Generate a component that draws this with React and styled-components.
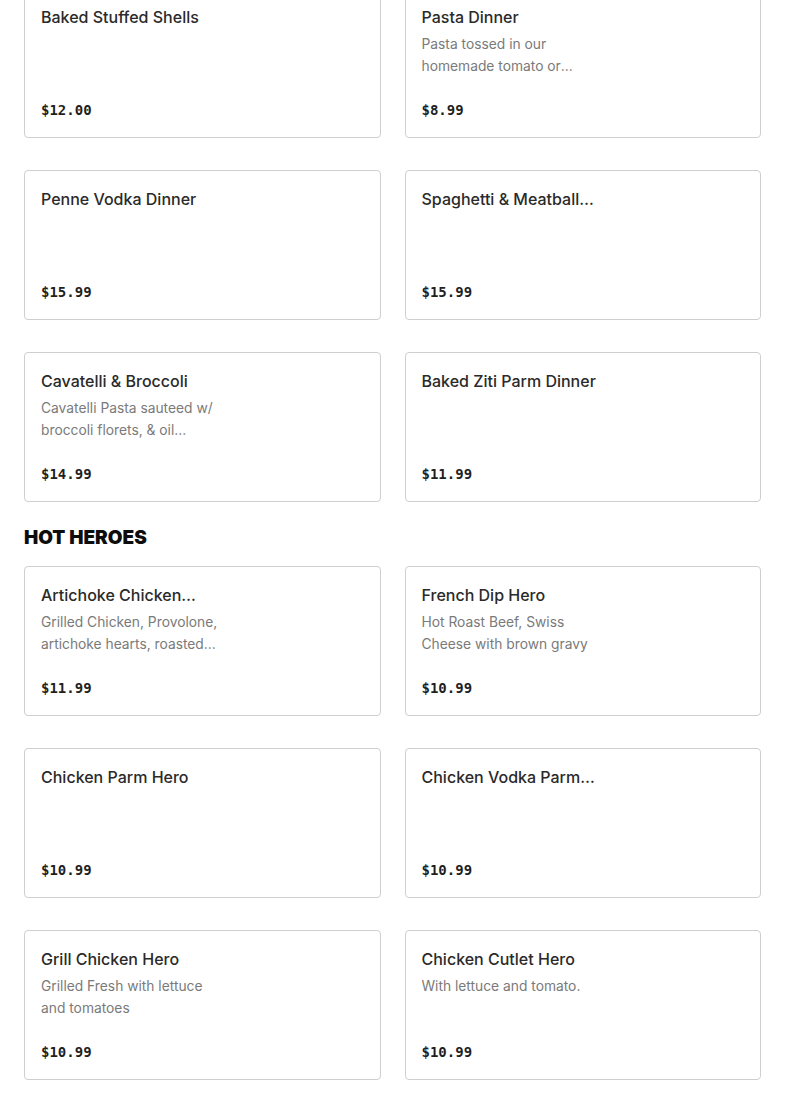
import React from 'react';
import styled, { createGlobalStyle } from 'styled-components';

const GlobalStyle = createGlobalStyle`
  html, body {
    margin: 0;
    padding: 0;
    background: #ffffff;
  }
  body {
    font-family: Inter, "Noto Sans", sans-serif;
    color: #2d2d2d;
  }
`;

const Page = styled.div`
  padding: 0 24px 24px;
  margin-top: -12px;
`;

const Section = styled.section`
  display: flex;
  flex-direction: column;
`;

const SectionTitle = styled.h2`
  margin: 25px 0 17px;
  font-family: Inter, sans-serif;
  font-weight: 900;
  font-size: 19px;
  line-height: 22px;
  color: #0d0d0d;
`;

const Grid = styled.div`
  display: grid;
  grid-template-columns: 1fr 1fr;
  column-gap: 24px;
  row-gap: 32px;
`;

const Card = styled.div`
  box-sizing: border-box;
  height: 150px;
  display: flex;
  flex-direction: column;
  padding: 15px 16px 17px;
  border: 1px solid #cfcfcf;
  border-radius: 4px;
  background: #fff;
`;

const TextColumn = styled.div`
  width: 180px;
  display: flex;
  flex-direction: column;
`;

const ItemName = styled.div`
  font-size: 16px;
  font-weight: 500;
  line-height: 26px;
  color: #2a2a2a;
  display: -webkit-box;
  -webkit-line-clamp: 1;
  -webkit-box-orient: vertical;
  overflow: hidden;
`;

const ItemDesc = styled.div`
  margin-top: 3px;
  font-size: 13.8px;
  line-height: 22px;
  color: #7a7a7a;
  display: -webkit-box;
  -webkit-line-clamp: 2;
  -webkit-box-orient: vertical;
  overflow: hidden;
`;

const Price = styled.div`
  margin-top: auto;
  font-family: "DejaVu Sans Mono", "Liberation Mono", monospace;
  font-weight: 700;
  font-size: 14px;
  line-height: 20px;
  color: #1f1f1f;
`;

const pasta = [
  { name: 'Baked Stuffed Shells', price: '$12.00' },
  { name: 'Pasta Dinner', desc: 'Pasta tossed in our homemade tomato or vodka sauce', price: '$8.99' },
  { name: 'Penne Vodka Dinner', price: '$15.99' },
  { name: 'Spaghetti & Meatball Dinner', price: '$15.99' },
  { name: 'Cavatelli & Broccoli', desc: 'Cavatelli Pasta sauteed w/ broccoli florets, & oil garnished with garlic', price: '$14.99' },
  { name: 'Baked Ziti Parm Dinner', price: '$11.99' },
];

const heroes = [
  { name: 'Artichoke Chicken Hero', desc: 'Grilled Chicken, Provolone, artichoke hearts, roasted peppers', price: '$11.99' },
  { name: 'French Dip Hero', desc: 'Hot Roast Beef, Swiss Cheese with brown gravy', price: '$10.99' },
  { name: 'Chicken Parm Hero', price: '$10.99' },
  { name: 'Chicken Vodka Parm Hero', price: '$10.99' },
  { name: 'Grill Chicken Hero', desc: 'Grilled Fresh with lettuce and tomatoes', price: '$10.99' },
  { name: 'Chicken Cutlet Hero', desc: 'With lettuce and tomato.', price: '$10.99' },
];

const MenuCard = ({ item }) => (
  <Card>
    <TextColumn>
      <ItemName>{item.name}</ItemName>
      {item.desc && <ItemDesc>{item.desc}</ItemDesc>}
    </TextColumn>
    <Price>{item.price}</Price>
  </Card>
);

const App = () => (
  <Page>
    <GlobalStyle />
    <Section>
      <Grid>
        {pasta.map((item) => <MenuCard key={item.name} item={item} />)}
      </Grid>
    </Section>
    <Section>
      <SectionTitle>HOT HEROES</SectionTitle>
      <Grid>
        {heroes.map((item) => <MenuCard key={item.name} item={item} />)}
      </Grid>
    </Section>
  </Page>
);

export default App;
